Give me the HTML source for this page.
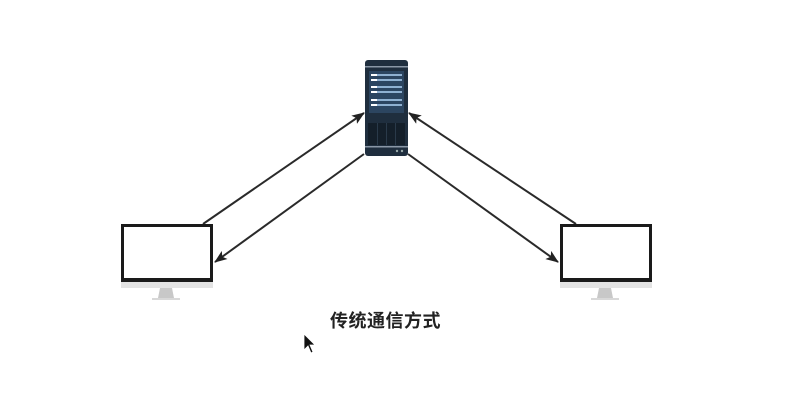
<!DOCTYPE html>
<html><head><meta charset="utf-8"><style>
body{margin:0;width:794px;height:400px;background:#fff;overflow:hidden;position:relative}
.t{position:absolute;left:330px;top:307px;font:bold 18px "Liberation Sans","Noto Sans CJK SC",sans-serif;color:#222;letter-spacing:0.5px}
</style></head><body>
<svg width="794" height="400" style="position:absolute;left:0;top:0">
<defs><marker id="a" markerWidth="13" markerHeight="10" refX="12" refY="5" orient="auto" markerUnits="userSpaceOnUse"><path d="M0,0 L13,5 L0,10 L3,5 Z" fill="#222"/></marker></defs>
<g stroke="#2a2a2a" stroke-width="2" fill="none">
<line x1="203" y1="224" x2="364" y2="113" marker-end="url(#a)"/>
<line x1="364" y1="154" x2="215" y2="262" marker-end="url(#a)"/>
<line x1="576" y1="224" x2="409" y2="113" marker-end="url(#a)"/>
<line x1="408" y1="154" x2="558" y2="262" marker-end="url(#a)"/>
</g>
<rect x="365" y="60" width="43" height="96" rx="3" fill="#1f2e3e"/>
<rect x="365" y="66" width="43" height="1.5" fill="#8a97a6"/>
<rect x="369" y="71" width="35" height="42" fill="#2c4560"/>
<g fill="#8fb0d0"><rect x="371" y="74" width="31" height="2"/><rect x="371" y="79" width="31" height="2"/><rect x="371" y="86" width="31" height="2"/><rect x="371" y="91" width="31" height="2"/><rect x="371" y="99" width="31" height="2"/><rect x="371" y="104" width="31" height="2"/></g>
<g fill="#fff"><rect x="371" y="74" width="6" height="2"/><rect x="371" y="79" width="6" height="2"/><rect x="371" y="86" width="6" height="2"/><rect x="371" y="91" width="6" height="2"/><rect x="371" y="99" width="6" height="2"/><rect x="371" y="104" width="6" height="2"/></g>
<rect x="368" y="123" width="37" height="22" fill="#141f2a"/>
<g fill="#2a3a4a"><rect x="377" y="123" width="1" height="22"/><rect x="386" y="123" width="1" height="22"/><rect x="395" y="123" width="1" height="22"/></g>
<rect x="365" y="146" width="43" height="1.5" fill="#8a97a6"/>
<circle cx="397" cy="151" r="1.2" fill="#9aa"/><circle cx="402" cy="151" r="1.2" fill="#9aa"/>
<g id="m">
<rect x="121" y="224" width="92" height="60" fill="#1a1a1a"/>
<rect x="124" y="227" width="86" height="51" fill="#fff"/>
<rect x="121" y="282" width="92" height="6" fill="#e3e3e3"/>
<path d="M160,288 L172,288 L174,298 L158,298 Z" fill="#c8c8c8"/>
<rect x="152" y="298" width="28" height="2" fill="#d8d8d8"/>
</g>
<use href="#m" x="439"/>
<path d="M304,334 L304,350 L308,346 L311,353 L313,352 L310,345 L315,345 Z" fill="#111" stroke="#fff" stroke-width="0.8"/>
</svg>
<div class="t">传统通信方式</div>
</body></html>
